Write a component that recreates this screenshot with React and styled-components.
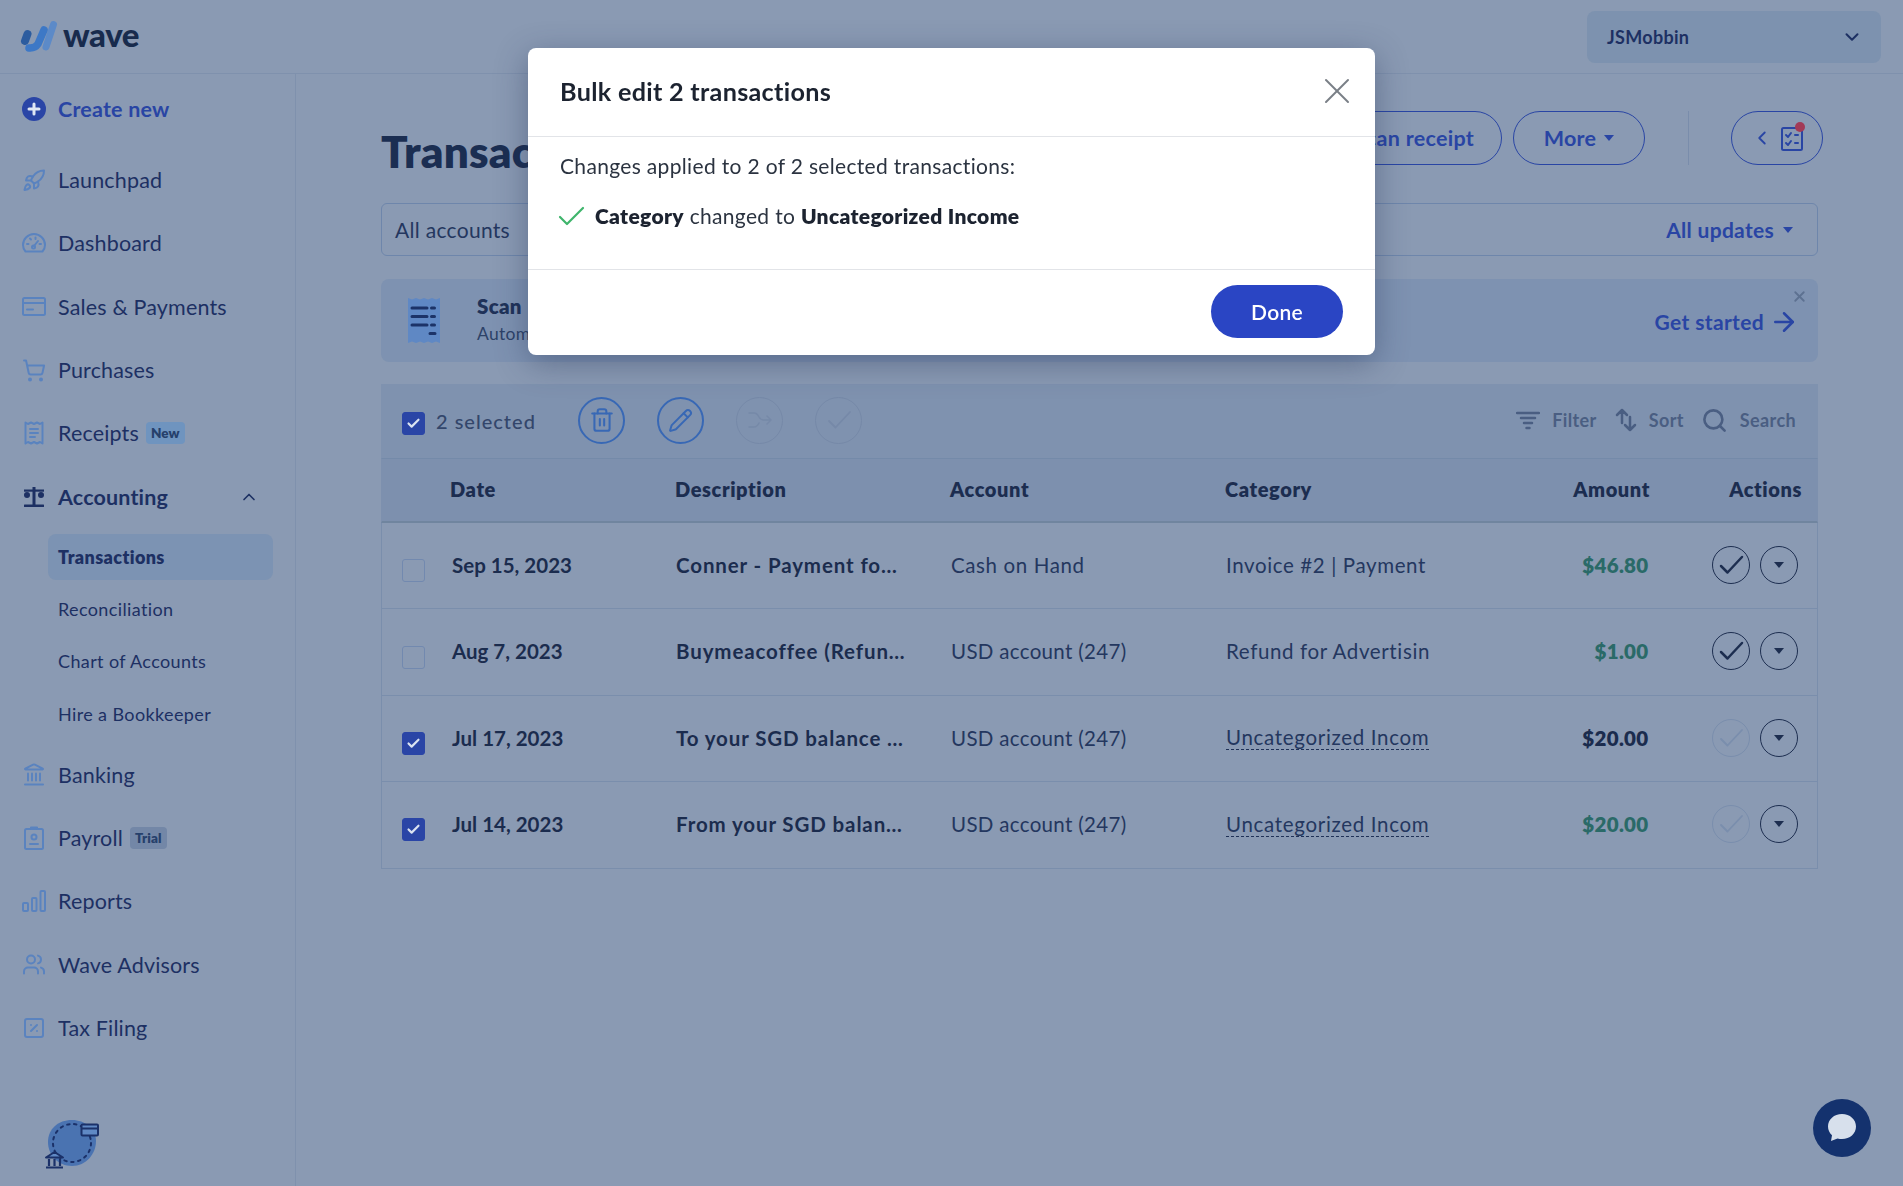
import React from 'react';
import styled, { createGlobalStyle } from 'styled-components';
import { Rocket, ShoppingCart, Landmark, Users, SquarePercent, ChevronUp, ChevronDown, ChevronLeft, Search, X, ArrowRight, Trash2, Pencil, Check } from 'lucide-react';

const FONT = '"Lato", "Open Sans", "Liberation Sans", sans-serif';
const NAVY = '#1d3063';
const INK = '#1b2c4e';
const BLUE = '#2945a4';
const ICON = '#5a83bf';

const Global = createGlobalStyle`
  html, body { margin: 0; padding: 0; background: #8a9ab3; }
  * { box-sizing: border-box; }
  body { font-family: ${FONT}; color: ${INK}; }
`;

const Page = styled.div`
  width: 1903px; height: 1186px; overflow: hidden; background: #8a9ab3;
  display: flex; flex-direction: column;
`;
const TopBar = styled.header`
  height: 74px; flex: none; border-bottom: 1px solid #7f91ad;
  display: flex; align-items: center; justify-content: space-between; padding: 0 22px 2px 20px;
`;
const Brand = styled.div`display: flex; align-items: center; gap: 5px;`;
const BrandName = styled.span`font-size: 33px; font-weight: 900; color: #182b4d; letter-spacing: -0.4px; line-height: 1; margin-top: -2px;`;
const AccountSwitch = styled.div`
  width: 294px; height: 52px; border-radius: 8px; background: #7d92af; margin-top: 2px;
  display: flex; align-items: center; justify-content: space-between; padding: 0 18px 0 20px;
  font-size: 18px; font-weight: 700; color: ${NAVY}; letter-spacing: .3px;
`;
const Body = styled.div`flex: 1; display: flex; min-height: 0;`;
const Side = styled.aside`
  width: 296px; flex: none; border-right: 1.5px solid #7f91ad; padding-top: 3.5px;
  display: flex; flex-direction: column;
`;
const CreateRow = styled.div`
  height: 63px; margin-bottom: 8px; display: flex; align-items: center; gap: 12px; padding-left: 22px;
  font-size: 21.5px; font-weight: 700; color: ${BLUE}; letter-spacing: .2px;
`;
const PlusDot = styled.span`
  width: 24px; height: 24px; border-radius: 50%; background: #2a45a6; color: #dfe6f3;
  display: flex; align-items: center; justify-content: center; flex: none;
`;
const NavRow = styled.div`
  height: 63.3px; display: flex; align-items: center; padding-left: 22px; padding-right: 36px; gap: 12px;
  font-size: 21.5px; letter-spacing: .16px; color: ${NAVY}; font-weight: ${p => (p.$active ? 700 : 400)};
`;
const NavIcon = styled.span`
  width: 24px; height: 26px; flex: none; display: flex; align-items: center; justify-content: center;
  color: ${p => (p.$active ? NAVY : ICON)};
`;
const Tag = styled.span`
  font-size: 13.5px; font-weight: 800; padding: 3px 5px; border-radius: 4px; margin-left: -5px; letter-spacing: .1px;
  background: ${p => (p.$trial ? '#7387a7' : '#6f94bf')}; color: #26406b;
`;
const Fill = styled.span`flex: 1;`;
const SubList = styled.div`
  display: flex; flex-direction: column; gap: 6.3px; margin: 5.5px 0 6.5px 48px; width: 225px;
`;
const SubItem = styled.div`
  height: 46px; display: flex; align-items: center; padding-left: 10px; border-radius: 8px;
  font-size: 18px; letter-spacing: .38px; color: ${NAVY}; font-weight: ${p => (p.$active ? 800 : 400)};
  background: ${p => (p.$active ? '#7c93b3' : 'transparent')};
`;
const SideArt = styled.div`margin-top: auto; padding: 0 0 14px 45px;`;

const Main = styled.main`flex: 1; padding: 37px 85px 0 85px; min-width: 0;`;
const TitleRow = styled.div`height: 54px; display: flex; align-items: center; margin: 0 -5px 38px 0;`;
const Title = styled.h1`
  margin: 26px 0 0; font-size: 44px; font-weight: 800; color: #1b2e52; flex: 1; letter-spacing: .2px; line-height: 1;
`;
const PillBtn = styled.button`
  height: 54px; border-radius: 27px; border: 1.5px solid ${BLUE}; background: transparent; color: ${BLUE};
  font: 700 21.5px ${FONT}; letter-spacing: .3px; display: flex; align-items: center; justify-content: center; gap: 8px;
  width: ${p => p.$w}px; margin-left: ${p => p.$ml || 0}px; padding: 0 0 0 ${p => p.$pl || 0}px; flex: none;
`;
const Caret = styled.span`
  width: 0; height: 0; border-left: 5.5px solid transparent; border-right: 5.5px solid transparent;
  border-top: 6.5px solid ${p => p.$color || BLUE}; display: inline-block; flex: none;
`;
const VRule = styled.span`width: 1px; height: 54px; background: #7a8dab; margin: 0 42px 0 43px; flex: none;`;
const Notify = styled.span`position: relative; display: flex;`;
const Dot = styled.span`
  position: absolute; right: -2px; top: -4px; width: 10px; height: 10px; border-radius: 50%; background: #a23a57;
`;
const FilterBar = styled.div`
  height: 53px; margin-bottom: 23px; border: 1.5px solid #6e86ab; border-radius: 6px; padding: 0 24px 0 13px;
  display: flex; align-items: center; justify-content: space-between; font-size: 21px; color: #24375f; letter-spacing: .3px;
`;
const UpdatesLink = styled.span`
  display: flex; align-items: center; gap: 9px; color: ${BLUE}; font-weight: 700; font-size: 21px; letter-spacing: .3px;
`;
const Banner = styled.div`
  position: relative; height: 83px; margin-bottom: 22px; border-radius: 8px; background: #7e92b1;
  display: flex; align-items: center; padding: 0 19px 0 26px;
`;
const BannerText = styled.div`margin-left: 36px; flex: 1; display: flex; flex-direction: column; gap: 7px; margin-top: -2px;`;
const BannerTitle = styled.span`font-size: 20.5px; font-weight: 800; color: #1f3259; line-height: 22px; letter-spacing: .3px;`;
const BannerSub = styled.span`font-size: 17.5px; color: #2d4268; line-height: 20px; letter-spacing: .3px;`;
const GetStarted = styled.span`
  display: flex; align-items: center; gap: 5px; color: ${BLUE}; font-weight: 700; font-size: 21px; letter-spacing: .35px; margin-top: 2px;
`;
const BannerClose = styled.span`position: absolute; right: 10px; top: 9px; color: #5d7191; display: flex;`;

const TableWrap = styled.section`display: flex; flex-direction: column;`;
const Toolbar = styled.div`
  height: 74px; background: #7f92af; display: flex; align-items: center; padding: 0 22px 2px 21px;
`;
const Box = styled.span`
  width: 23px; height: 23px; border-radius: 3px; flex: none; display: flex; align-items: center; justify-content: center;
  border: 1.5px solid ${p => (p.$on ? '#2a45a6' : '#7289af')}; background: ${p => (p.$on ? '#2a45a6' : 'transparent')};
  color: #dbe3f1;
`;
const ToolBox = styled(Box)`margin-top: 7px;`;
const Selected = styled.span`
  margin-left: 11px; width: 142px; font-size: 20px; color: #33466b; letter-spacing: 1px; font-weight: 500; margin-top: 2px;
`;
const RoundTool = styled.span`
  width: 47px; height: 47px; border-radius: 50%; flex: none; margin-right: 32px;
  display: flex; align-items: center; justify-content: center;
  border: ${p => (p.$off ? '1.5px solid #7689a8' : '2px solid #3868b5')}; color: ${p => (p.$off ? '#7689a8' : '#3868b5')};
`;
const ToolRight = styled.div`margin-left: auto; display: flex; align-items: center;`;
const ToolLink = styled.span`
  display: flex; align-items: center; gap: 12px; margin-left: ${p => p.$ml}px;
  font-size: 18px; font-weight: 700; color: #4a5e82; letter-spacing: .38px;
`;
const Grid = styled.div`
  display: grid; grid-template-columns: 70px 224px 275px 275px 230px 195px 168px; align-items: center;
  border-left: 1.5px solid #7a8eac; border-right: 1.5px solid #7a8eac;
`;
const HeadRow = styled(Grid)`
  height: 65px; padding-bottom: 2px; background: #7d90ae; border-color: #7d90ae; border-top: 1px solid #748aa9; border-bottom: 2px solid #70859f;
  grid-template-columns: 68px 225px 275px 275px 230px 195px 169px;
  font-size: 20px; font-weight: 800; color: #1c2d50; letter-spacing: .6px;
`;
const Row = styled(Grid)`
  height: 86.4px; padding-bottom: 1.5px; border-bottom: 1.5px solid #7a8eac; font-size: 20.5px; color: #1f3157; letter-spacing: .3px;
`;
const CheckCell = styled.span`padding: 11.5px 0 0 20px; display: flex;`;
const DateCell = styled.span`font-weight: 700; color: #1b2c4e; white-space: nowrap; letter-spacing: 0;`;
const DescCell = styled.span`font-weight: 700; color: #1b2c4e; white-space: nowrap; letter-spacing: .88px;`;
const Plain = styled.span`white-space: nowrap; color: #24375f; letter-spacing: ${p => (p.$wide ? '.62px' : '.32px')};`;
const Dashed = styled.span`
  justify-self: start; white-space: nowrap; color: #24375f; border-bottom: 1.5px dashed #1f3157; line-height: 24px; letter-spacing: .68px;
`;
const Amount = styled.span`
  text-align: right; font-weight: 800; white-space: nowrap; padding-right: 2.5px; color: ${p => (p.$in ? '#2a6a68' : '#1b2c4e')};
`;
const HeadRight = styled.span`text-align: right;`;
const ActionHead = styled.span`text-align: right; padding-right: 17px;`;
const Actions = styled.span`display: flex; justify-content: flex-end; gap: 10px; padding-right: 21px;`;
const RoundAct = styled.span`
  width: 38px; height: 38px; border-radius: 50%; display: flex; align-items: center; justify-content: center; flex: none;
  border: 1.5px solid ${p => (p.$off ? '#7a8ead' : '#1d2e50')}; color: ${p => (p.$off ? '#7a8ead' : '#1d2e50')};
`;

const ChatFab = styled.div`
  position: fixed; left: 1813px; top: 1099px; width: 58px; height: 58px; border-radius: 50%;
  background: #14326e; display: flex; align-items: center; justify-content: center;
`;

const Overlay = styled.div`
  position: fixed; inset: 0; display: flex; justify-content: center; align-items: flex-start; padding-top: 47.5px;
`;
const Dialog = styled.div`
  width: 847px; height: 307px; background: #fff; border-radius: 8px; display: flex; flex-direction: column;
  box-shadow: 0 8px 32px rgba(35, 50, 85, .42);
`;
const DialogHead = styled.div`
  height: 89px; flex: none; border-bottom: 1.5px solid #e2e4e8; padding: 0 16px 2px 32px;
  display: flex; align-items: center; justify-content: space-between;
`;
const DialogTitle = styled.h2`margin: 0; font-size: 25.2px; font-weight: 700; color: #1c2330; letter-spacing: .3px;`;
const DialogClose = styled.span`display: flex; color: #7a7f86;`;
const DialogBody = styled.div`
  height: 133px; flex: none; border-bottom: 1.5px solid #e2e4e8; padding: 16px 32px 0;
  display: flex; flex-direction: column; gap: 24px; font-size: 21px; color: #2b3340; letter-spacing: .33px;
`;
const BodyLine = styled.div`line-height: 26px;`;
const ChangeLine = styled.div`display: flex; align-items: center; gap: 10px; margin-left: -2px; line-height: 26px;`;
const Strong = styled.b`font-weight: 800; color: #1c2330;`;
const DialogFoot = styled.div`flex: 1; display: flex; align-items: center; justify-content: flex-end; padding: 0 32px 2px 0;`;
const Done = styled.button`
  width: 132px; height: 53px; border: 0; border-radius: 27px; background: #2a45c4; color: #fff; padding: 0;
  font: 600 21px ${FONT}; letter-spacing: .3px;
`;

const S = { fill: 'none', stroke: 'currentColor', strokeWidth: 2, strokeLinecap: 'round', strokeLinejoin: 'round' };

const WaveMark = () => (
  <svg width="38" height="32" viewBox="0 0 38 32" fill="none">
    <path d="M33.500 4.500 L26 27" stroke="#5c8ac8" strokeWidth="7" strokeLinecap="round" />
    <path d="M24 10 L18 24 Q15 28.500 9 28" stroke="#3d78c6" strokeWidth="7.500" strokeLinecap="round" />
    <path d="M7.500 14 L5 21" stroke="#2c5c9f" strokeWidth="8" strokeLinecap="round" />
  </svg>
);
const GaugeIcon = () => (
  <svg width="24" height="20" viewBox="0 0 24 20" {...S}>
    <path d="M3.500 18.500C1.800 16.600 1 14.400 1 12 1 6 6 1 12 1s11 5 11 11c0 2.400-.8 4.600-2.500 6.500z" />
    <path d="M12 13l4-5M5 11h1.500M8 5.500l1 1M13.500 4.500v1.500M19 11h-1.500" />
    <circle cx="11.500" cy="14" r="1.500" />
  </svg>
);
const CardIcon = () => (
  <svg width="24" height="19" viewBox="0 0 24 19" {...S}>
    <rect x="1" y="1" width="22" height="17" rx="1.500" />
    <path d="M1 6h22M5 12.500h6" />
  </svg>
);
const ReceiptIcon = () => (
  <svg width="20" height="24" viewBox="0 0 20 24" {...S}>
    <path d="M1.500 1.500l2.500 1.500 3-1.500 3 1.500 3-1.500 3 1.500 2.500-1.500v21l-2.500-1.500-3 1.500-3-1.500-3 1.500-3-1.500-2.500 1.500z" />
    <path d="M6 8h8M6 12h8M6 16h5" />
  </svg>
);
const ScaleIcon = () => (
  <svg width="22" height="22" viewBox="0 0 22 22" fill="currentColor">
    <rect x="9.500" y="1" width="3" height="18" />
    <rect x="1" y="3.500" width="20" height="2.200" />
    <rect x="1" y="18.500" width="20" height="2.500" rx=".5" />
    <circle cx="4" cy="9" r="3" />
    <circle cx="18" cy="9" r="3" />
  </svg>
);
const PayrollIcon = () => (
  <svg width="20" height="24" viewBox="0 0 20 24" {...S}>
    <rect x="1" y="3" width="18" height="20" rx="1.500" />
    <path d="M7 3V1.500h6V3" />
    <circle cx="10" cy="11" r="2.500" />
    <path d="M6 18h8" />
  </svg>
);
const BarsIcon = () => (
  <svg width="24" height="22" viewBox="0 0 24 22" fill="none" stroke="currentColor" strokeWidth="2">
    <rect x="1" y="13" width="5" height="8" rx="1" />
    <rect x="10" y="8" width="4.500" height="13" rx="1" />
    <rect x="18.500" y="1" width="4.500" height="20" rx="1" />
  </svg>
);
const ChecklistIcon = () => (
  <svg width="22" height="25" viewBox="0 0 22 25" {...S} strokeWidth="2">
    <rect x="1" y="2" width="20" height="22" rx="1.500" />
    <path d="M5 9l2 2 3-4M5 17l2 2 3-4M14 9h3M14 17h3" />
  </svg>
);
const BannerReceipt = () => (
  <svg width="34" height="47" viewBox="0 0 34 47">
    <path d="M1 1l4 1.500 4-1.500 4 1.500 4-1.500 4 1.500 4-1.500 4 1.500 4-1.500v45l-4-1.500-4 1.500-4-1.500-4 1.500-4-1.500-4 1.500-4-1.500-4 1.500z" fill="#5f88c4" />
    <path d="M5 11h15M5 19.500h15M5 28h15M24.500 11h3M24.500 19.500h3M24.500 28h3M23 36.500h5" stroke="#1c3368" strokeWidth="3" strokeLinecap="round" fill="none" />
  </svg>
);
const SideArtwork = () => (
  <svg width="56" height="50" viewBox="0 0 56 50">
    <path d="M27 1c13 0 24 9 24 21 0 13-10 25-24 25C13 47 3 36 3 23 3 10 13 1 27 1z" fill="#4a73b1" />
    <circle cx="27" cy="24" r="19" fill="none" stroke="#1b3169" strokeWidth="2" strokeDasharray="2.500 4.500" strokeLinecap="round" />
    <rect x="36.500" y="5.500" width="16.500" height="11" rx="1" fill="#6089c4" stroke="#1b3169" strokeWidth="2" />
    <path d="M37 9.500h16" stroke="#1b3169" strokeWidth="2" />
    <path d="M1 38.500L9.500 33l8.500 5.500z" fill="#6089c4" stroke="#1b3169" strokeWidth="2" strokeLinejoin="round" />
    <path d="M4 40v7M9.500 40v7M15 40v7M1 48.500h17" stroke="#1b3169" strokeWidth="2.200" fill="none" />
  </svg>
);
const FilterIcon = () => (
  <svg width="24" height="20" viewBox="0 0 24 20" fill="none" stroke="currentColor" strokeWidth="2.500" strokeLinecap="round">
    <path d="M1 3h22M5 8h14M8 13h8M10.500 18h3" />
  </svg>
);
const SortIcon = () => (
  <svg width="22" height="24" viewBox="0 0 22 24" fill="none" stroke="currentColor" strokeWidth="2.500" strokeLinecap="round" strokeLinejoin="round">
    <path d="M7 15V2M2 7l5-5 5 5M15 9v13M10 17l5 5 5-5" />
  </svg>
);
const MergeIcon = () => (
  <svg width="24" height="18" viewBox="0 0 24 18" {...S} strokeWidth="1.500">
    <path d="M1 2h5c3 0 4 2 5 4s2 3 5 3h7M1 16h5c3 0 4-2 5-4M19 5l4 4-4 4" />
  </svg>
);
const ChatIcon = () => (
  <svg width="32" height="32" viewBox="0 0 32 32">
    <path d="M16 2C8 2 2 7.500 2 14.500c0 3.500 1.500 6.500 4 8.700L5 29l6.500-2.500c1.500.4 3 .6 4.500.6 8 0 14-5.600 14-12.600S24 2 16 2z" fill="#d7e0ec" />
  </svg>
);
const GreenCheck = () => (
  <svg width="27" height="20" viewBox="0 0 27 20" fill="none" stroke="#3fb56c" strokeWidth="2.200" strokeLinecap="round" strokeLinejoin="round">
    <path d="M2 11l7 7L25 2" />
  </svg>
);
const ActCheck = ({ off }) => (
  <svg width="26" height="20" viewBox="0 0 26 20" fill="none" stroke="currentColor" strokeWidth={off ? 1.800 : 2.500} strokeLinecap="round" strokeLinejoin="round">
    <path d="M3 11l6.500 6.500L24 2" />
  </svg>
);

const nav1 = [
  ['Launchpad', <Rocket size={25} strokeWidth={2} />],
  ['Dashboard', <GaugeIcon />],
  ['Sales & Payments', <CardIcon />],
  ['Purchases', <ShoppingCart size={25} strokeWidth={2} />],
];
const nav2 = [
  ['Banking', <Landmark size={25} strokeWidth={2} />],
  ['Payroll', <PayrollIcon />, 'Trial'],
  ['Reports', <BarsIcon />],
  ['Wave Advisors', <Users size={25} strokeWidth={2} />],
  ['Tax Filing', <SquarePercent size={24} strokeWidth={2} />],
];
const rows = [
  { on: false, date: 'Sep 15, 2023', desc: 'Conner - Payment fo…', acct: 'Cash on Hand', wide: true, cat: 'Invoice #2 | Payment', amt: '$46.80', inc: true },
  { on: false, date: 'Aug 7, 2023', desc: 'Buymeacoffee (Refun…', acct: 'USD account (247)', cat: 'Refund for Advertisin', amt: '$1.00', inc: true },
  { on: true, date: 'Jul 17, 2023', desc: 'To your SGD balance …', acct: 'USD account (247)', cat: 'Uncategorized Incom', amt: '$20.00', inc: false },
  { on: true, date: 'Jul 14, 2023', desc: 'From your SGD balan…', acct: 'USD account (247)', cat: 'Uncategorized Incom', amt: '$20.00', inc: true },
];

const NavLine = ({ label, icon, tag }) => (
  <NavRow>
    <NavIcon>{icon}</NavIcon>
    <span>{label}</span>
    {tag && <Tag $trial={tag === 'Trial'}>{tag}</Tag>}
  </NavRow>
);

export default function App() {
  return (
    <Page>
      <Global />
      <TopBar>
        <Brand><WaveMark /><BrandName>wave</BrandName></Brand>
        <AccountSwitch>JSMobbin<ChevronDown size={22} strokeWidth={2.2} /></AccountSwitch>
      </TopBar>
      <Body>
        <Side>
          <CreateRow><PlusDot><svg width="14" height="14" viewBox="0 0 14 14" stroke="currentColor" strokeWidth="3" strokeLinecap="round"><path d="M7 2v10M2 7h10" /></svg></PlusDot>Create new</CreateRow>
          {nav1.map(([l, i]) => <NavLine key={l} label={l} icon={i} />)}
          <NavLine label="Receipts" icon={<ReceiptIcon />} tag="New" />
          <NavRow $active>
            <NavIcon $active><ScaleIcon /></NavIcon>
            <span>Accounting</span>
            <Fill />
            <ChevronUp size={20} strokeWidth={2} />
          </NavRow>
          <SubList>
            <SubItem $active>Transactions</SubItem>
            <SubItem>Reconciliation</SubItem>
            <SubItem>Chart of Accounts</SubItem>
            <SubItem>Hire a Bookkeeper</SubItem>
          </SubList>
          {nav2.map(([l, i, t]) => <NavLine key={l} label={l} icon={i} tag={t} />)}
          <SideArt><SideArtwork /></SideArt>
        </Side>
        <Main>
          <TitleRow>
            <Title>Transac</Title>
            <PillBtn $w={200} $pl={24}>Scan receipt</PillBtn>
            <PillBtn $w={132} $ml={11}>More <Caret /></PillBtn>
            <VRule />
            <PillBtn $w={92}>
              <ChevronLeft size={22} strokeWidth={2} />
              <Notify><ChecklistIcon /><Dot /></Notify>
            </PillBtn>
          </TitleRow>
          <FilterBar>
            <span>All accounts</span>
            <UpdatesLink>All updates <Caret /></UpdatesLink>
          </FilterBar>
          <Banner>
            <BannerReceipt />
            <BannerText>
              <BannerTitle>Scan</BannerTitle>
              <BannerSub>Autom</BannerSub>
            </BannerText>
            <GetStarted>Get started <ArrowRight size={30} strokeWidth={2} /></GetStarted>
            <BannerClose><X size={17} strokeWidth={2.6} /></BannerClose>
          </Banner>
          <TableWrap>
            <Toolbar>
              <ToolBox $on><Check size={15} strokeWidth={3.4} /></ToolBox>
              <Selected>2 selected</Selected>
              <RoundTool><Trash2 size={26} strokeWidth={1.9} /></RoundTool>
              <RoundTool><Pencil size={25} strokeWidth={1.9} /></RoundTool>
              <RoundTool $off><MergeIcon /></RoundTool>
              <RoundTool $off><ActCheck off /></RoundTool>
              <ToolRight>
                <ToolLink><FilterIcon />Filter</ToolLink>
                <ToolLink $ml={18}><SortIcon />Sort</ToolLink>
                <ToolLink $ml={17}><Search size={27} strokeWidth={2.3} />Search</ToolLink>
              </ToolRight>
            </Toolbar>
            <HeadRow>
              <span />
              <span>Date</span>
              <span>Description</span>
              <span>Account</span>
              <span>Category</span>
              <HeadRight>Amount</HeadRight>
              <ActionHead>Actions</ActionHead>
            </HeadRow>
            {rows.map(r => (
              <Row key={r.date}>
                <CheckCell><Box $on={r.on}>{r.on && <Check size={15} strokeWidth={3.4} />}</Box></CheckCell>
                <DateCell>{r.date}</DateCell>
                <DescCell>{r.desc}</DescCell>
                <Plain $wide={r.wide}>{r.acct}</Plain>
                {r.on ? <Dashed>{r.cat}</Dashed> : <Plain $wide>{r.cat}</Plain>}
                <Amount $in={r.inc}>{r.amt}</Amount>
                <Actions>
                  <RoundAct $off={r.on}><ActCheck off={r.on} /></RoundAct>
                  <RoundAct><Caret $color="#1d2e50" /></RoundAct>
                </Actions>
              </Row>
            ))}
          </TableWrap>
        </Main>
      </Body>
      <ChatFab><ChatIcon /></ChatFab>
      <Overlay>
        <Dialog>
          <DialogHead>
            <DialogTitle>Bulk edit 2 transactions</DialogTitle>
            <DialogClose><X size={44} strokeWidth={1.1} /></DialogClose>
          </DialogHead>
          <DialogBody>
            <BodyLine>Changes applied to 2 of 2 selected transactions:</BodyLine>
            <ChangeLine>
              <GreenCheck />
              <span><Strong>Category</Strong> changed to <Strong>Uncategorized Income</Strong></span>
            </ChangeLine>
          </DialogBody>
          <DialogFoot><Done>Done</Done></DialogFoot>
        </Dialog>
      </Overlay>
    </Page>
  );
}
